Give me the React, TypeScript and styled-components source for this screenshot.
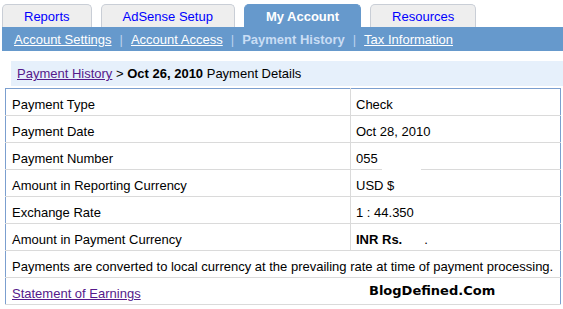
import React from 'react';
import styled, { createGlobalStyle } from 'styled-components';

const GlobalStyle = createGlobalStyle`
  body {
    margin: 0;
    background: #fff;
    font-family: Arial, "Liberation Sans", sans-serif;
    font-size: 13px;
    color: #000;
  }
`;

const Page = styled.div`
  padding: 4px 0 0 2px;
  width: 561px;
`;

const TabRow = styled.div`
  display: flex;
  gap: 9px;
  height: 23px;
`;

const Tab = styled.div<{ $active?: boolean }>`
  height: 22px;
  line-height: 23px;
  padding: 0 21px;
  border: 1px solid ${p => (p.$active ? '#6699cc' : '#c9ced6')};
  border-bottom: none;
  border-radius: 5px 5px 0 0;
  background: ${p => (p.$active ? '#6699cc' : '#eeeeee')};
  color: ${p => (p.$active ? '#fff' : '#0000ff')};
  font-weight: ${p => (p.$active ? 'bold' : 'normal')};
  white-space: nowrap;
`;

const SubNav = styled.div`
  display: flex;
  align-items: center;
  height: 24px;
  padding-left: 12px;
  background: #6699cc;
`;

const SubLink = styled.a<{ $active?: boolean }>`
  color: ${p => (p.$active ? '#c9ddf4' : '#fff')};
  font-weight: ${p => (p.$active ? 'bold' : 'normal')};
  text-decoration: ${p => (p.$active ? 'none' : 'underline')};
  white-space: nowrap;
`;

const Sep = styled.span`
  color: #bcd2ec;
  margin: 0 8px;
`;

const Crumbs = styled.div`
  margin: 10px 0 0 9px;
  height: 25px;
  line-height: 25px;
  padding-left: 6px;
  background: #e6f0fb;
`;

const VisitedLink = styled.a`
  color: #551a8b;
  text-decoration: underline;
`;

const Details = styled.table`
  margin: 2px 0 0 3px;
  width: 556px;
  border-collapse: collapse;
  border: 1px solid #7b9fcf;
`;

const Row = styled.tr`
  height: 27px;
  border-bottom: 1px solid #dadada;
`;

const Label = styled.td`
  width: 332px;
  padding: 5px 6px 0;
  border-right: 1px solid #dadada;
`;

const Value = styled.td<{ $bold?: boolean }>`
  position: relative;
  padding: 5px 5px 0;
  font-weight: ${p => (p.$bold ? 'bold' : 'normal')};
`;

const Hidden = styled.span`
  position: absolute;
  left: 31px;
  bottom: -1px;
  width: 39px;
  height: 2px;
  background: #fff;
`;

const Dot = styled.span`
  margin-left: 22px;
  font-weight: normal;
`;

const Wide = styled.td`
  position: relative;
  padding: 5px 6px 0;
`;

const Watermark = styled.span`
  position: absolute;
  left: 363px;
  top: 5px;
  font-family: "DejaVu Sans", Verdana, sans-serif;
  font-weight: bold;
  font-size: 13px;
`;

const rows: { label: string; value: React.ReactNode; bold?: boolean; hidden?: boolean }[] = [
  { label: 'Payment Type', value: 'Check' },
  { label: 'Payment Date', value: 'Oct 28, 2010' },
  { label: 'Payment Number', value: '055', hidden: true },
  { label: 'Amount in Reporting Currency', value: 'USD $' },
  { label: 'Exchange Rate', value: '1 : 44.350' },
  { label: 'Amount in Payment Currency', value: <>INR Rs.<Dot>.</Dot></>, bold: true },
];

export default function App() {
  return (
    <Page>
      <GlobalStyle />
      <TabRow>
        <Tab>Reports</Tab>
        <Tab>AdSense Setup</Tab>
        <Tab $active>My Account</Tab>
        <Tab>Resources</Tab>
      </TabRow>
      <SubNav>
        <SubLink href="#">Account Settings</SubLink>
        <Sep>|</Sep>
        <SubLink href="#">Account Access</SubLink>
        <Sep>|</Sep>
        <SubLink $active>Payment History</SubLink>
        <Sep>|</Sep>
        <SubLink href="#">Tax Information</SubLink>
      </SubNav>
      <Crumbs>
        <VisitedLink href="#">Payment History</VisitedLink> &gt; <b>Oct 26, 2010</b> Payment Details
      </Crumbs>
      <Details>
        <tbody>
          {rows.map(r => (
            <Row key={r.label}>
              <Label>{r.label}</Label>
              <Value $bold={r.bold}>
                {r.value}
                {r.hidden && <Hidden />}
              </Value>
            </Row>
          ))}
          <Row>
            <Wide colSpan={2}>
              Payments are converted to local currency at the prevailing rate at time of payment processing.
            </Wide>
          </Row>
          <Row>
            <Wide colSpan={2}>
              <VisitedLink href="#">Statement of Earnings</VisitedLink>
              <Watermark>BlogDefined.Com</Watermark>
            </Wide>
          </Row>
        </tbody>
      </Details>
    </Page>
  );
}
